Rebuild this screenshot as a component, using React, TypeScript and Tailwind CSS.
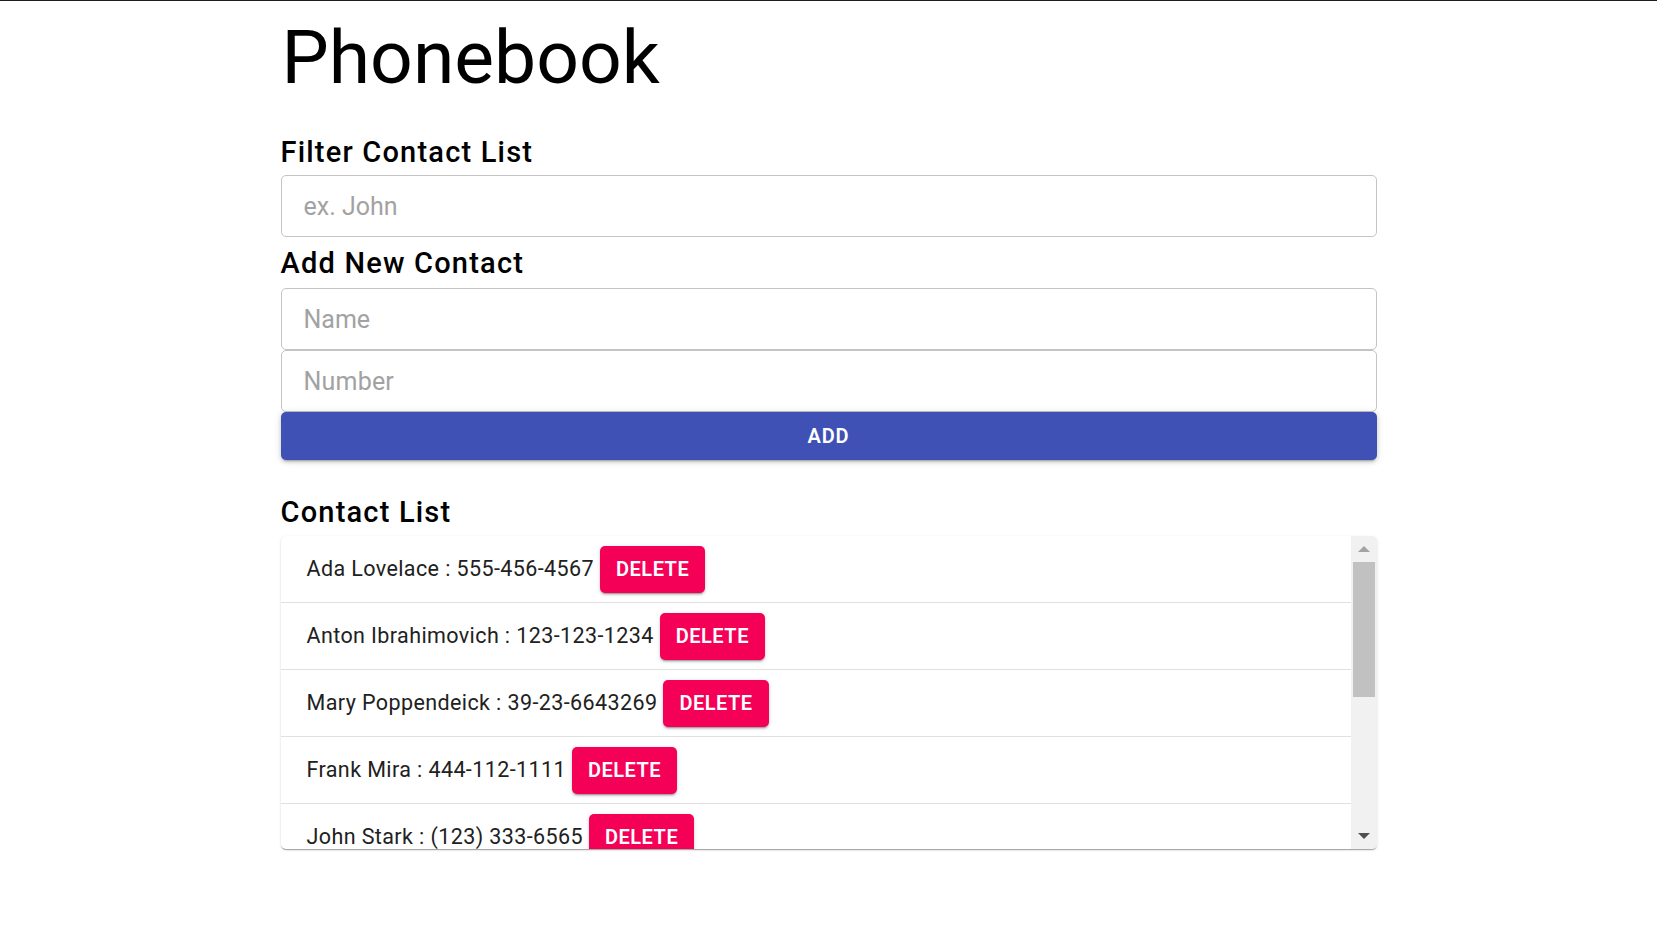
const contacts = [
  { name: "Ada Lovelace", number: "555-456-4567" },
  { name: "Anton Ibrahimovich", number: "123-123-1234" },
  { name: "Mary Poppendeick", number: "39-23-6643269" },
  { name: "Frank Mira", number: "444-112-1111" },
  { name: "John Stark", number: "(123) 333-6565" },
];

const App = () => {
  return (
    <div className="min-h-screen bg-white text-black font-['Roboto',_'Liberation_Sans',_sans-serif]">
      <div className="h-px bg-[#1e1e1e]" />
      <div className="mx-auto w-[1096px]">
        <h1 className="mt-[18px] ml-px text-[75px] leading-[76px] font-normal">Phonebook</h1>

        {/* Filter */}
        <h2 className="mt-[39px] text-[29px] leading-[36px] font-medium tracking-[1.2px]">Filter Contact List</h2>
        <input
          className="mt-[5px] block h-[62px] w-full rounded-[5px] border border-[#c4c4c4] px-[22px] text-[25px] outline-none placeholder:text-[#a2a2a2]"
          placeholder="ex. John"
        />

        {/* Add contact */}
        <h2 className="mt-[8px] text-[29px] leading-[36px] font-medium tracking-[1.2px]">Add New Contact</h2>
        <div className="mt-[7px] flex flex-col">
          <input
            className="block h-[62px] w-full rounded-[5px] border border-[#c4c4c4] px-[22px] text-[25px] outline-none placeholder:text-[#a2a2a2]"
            placeholder="Name"
          />
          <input
            className="block h-[62px] w-full rounded-[5px] border border-[#c4c4c4] px-[22px] text-[25px] tracking-[0.2px] outline-none placeholder:text-[#a2a2a2]"
            placeholder="Number"
          />
          <button className="h-[48px] w-full rounded-[5px] bg-[#3f51b5] text-[20px] font-semibold tracking-[0.8px] text-white shadow-[0_3px_2px_-2px_rgba(0,0,0,0.25),0_2px_4px_0_rgba(0,0,0,0.14),0_1px_8px_0_rgba(0,0,0,0.12)]">
            ADD
          </button>
        </div>

        {/* List */}
        <h2 className="mt-[34px] text-[29px] leading-[36px] font-medium tracking-[1.2px]">Contact List</h2>
        <div className="mt-[6px] flex h-[313px] overflow-hidden rounded-[5px] bg-white shadow-[0_2px_1px_-1px_rgba(0,0,0,0.2),0_1px_1px_0_rgba(0,0,0,0.14),0_1px_3px_0_rgba(0,0,0,0.12)]">
          <div className="flex-1 overflow-hidden">
            {contacts.map((c, i) => (
              <div key={i} className="flex h-[67px] shrink-0 items-center border-b border-[#e0e0e0] pl-[26px]">
                <span className="text-[21.5px] tracking-[0.4px] text-[#212121]">
                  {c.name} : {c.number}
                </span>
                <button className="ml-[6px] h-[47px] rounded-[5px] bg-[#f50057] px-[16px] text-[20px] font-semibold tracking-[0.5px] text-white shadow-[0_3px_1px_-2px_rgba(0,0,0,0.2),0_2px_2px_0_rgba(0,0,0,0.14),0_1px_5px_0_rgba(0,0,0,0.12)]">
                  DELETE
                </button>
              </div>
            ))}
          </div>
          {/* scrollbar */}
          <div className="flex w-[26px] flex-col bg-[#f1f1f1]">
            <div className="flex h-[26px] items-center justify-center">
              <div className="h-0 w-0 border-x-[6px] border-b-[6px] border-x-transparent border-b-[#a3a3a3]" />
            </div>
            <div className="flex-1 px-[2px]">
              <div className="h-[135px] bg-[#c1c1c1]" />
            </div>
            <div className="flex h-[26px] items-center justify-center">
              <div className="h-0 w-0 border-x-[6px] border-t-[6px] border-x-transparent border-t-[#505050]" />
            </div>
          </div>
        </div>
      </div>
    </div>
  );
};

export default App;
